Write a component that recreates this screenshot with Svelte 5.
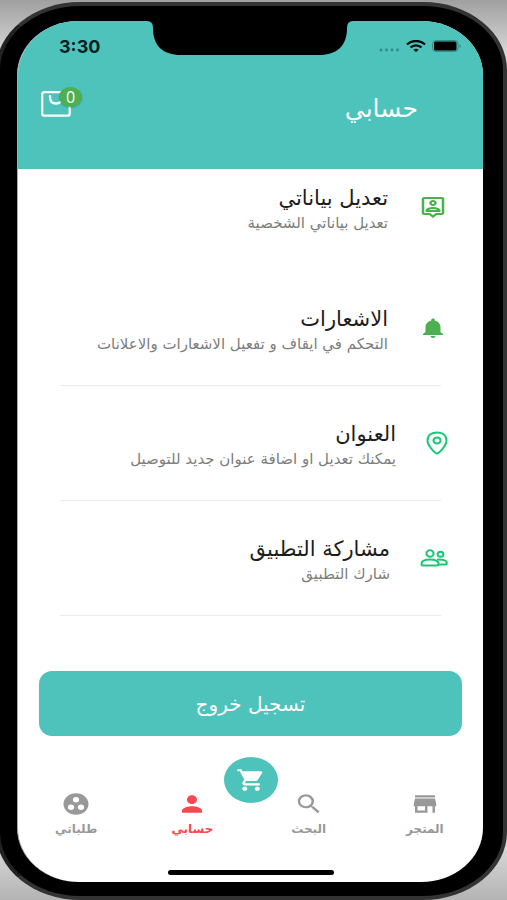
<script>
    let cart_count = 0
    let active = "account"

    const rows = [
        {
            icon: "profile",
            title: "تعديل بياناتي",
            text: "تعديل بياناتي الشخصية"
        },
        {
            icon: "bell",
            title: "الاشعارات",
            text: "التحكم في ايقاف و تفعيل الاشعارات والاعلانات"
        },
        {
            icon: "pin",
            title: "العنوان",
            text: "يمكنك تعديل او اضافة عنوان جديد للتوصيل"
        },
        {
            icon: "people",
            title: "مشاركة التطبيق",
            text: "شارك التطبيق"
        }
    ]

    const tabs = [
        {
            name: "store",
            label: "المتجر",
            path: "M20 4H4v2h16V4zm1 10v-2l-1-5H4l-1 5v2h1v6h10v-6h4v6h2v-6h1zm-9 4H6v-4h6v4z"
        },
        {
            name: "search",
            label: "البحث",
            path: "M15.5 14h-.79l-.28-.27A6.47 6.47 0 0 0 16 9.5 6.5 6.5 0 1 0 9.5 16c1.61 0 3.09-.59 4.23-1.57l.27.28v.79l5 4.99L20.49 19l-4.99-5zm-6 0C7.01 14 5 11.99 5 9.5S7.01 5 9.5 5 14 7.01 14 9.5 11.99 14 9.5 14z"
        },
        {
            name: "account",
            label: "حسابي",
            path: "M12 12c2.21 0 4-1.79 4-4s-1.79-4-4-4-4 1.79-4 4 1.79 4 4 4zm0 2c-2.67 0-8 1.34-8 4v2h16v-2c0-2.66-5.33-4-8-4z"
        },
        {
            name: "orders",
            label: "طلباتي",
            path: "M12 2C6.48 2 2 6.48 2 12s4.48 10 10 10 10-4.48 10-10S17.52 2 12 2zM8 17.5a2.5 2.5 0 0 1 0-5 2.5 2.5 0 0 1 0 5zM9.5 8a2.5 2.5 0 0 1 5 0 2.5 2.5 0 0 1-5 0zm6.5 9.5a2.5 2.5 0 0 1 0-5 2.5 2.5 0 0 1 0 5z"
        }
    ]

    const select_tab = (name) => {
        active = name
    }
</script>

<div class="stage">
    <div class="phone">
        <main class="screen" dir="rtl">
            <header>
                <div class="status" dir="ltr">
                    <span class="time">3:30</span>
                    <svg class="notch" viewBox="0 0 206 35" preserveAspectRatio="none" aria-hidden="true">
                        <path d="M0 0Q6 0 6 7C6 25 16 34 34 34H172C190 34 200 25 200 7Q200 0 206 0Z"/>
                    </svg>
                    <span class="signals">
                        <svg width="22" height="12" viewBox="0 0 22 12" fill="#2c8a85" aria-hidden="true">
                            <circle cx="3" cy="10" r="1.4"/>
                            <circle cx="8.5" cy="10" r="1.4"/>
                            <circle cx="14" cy="10" r="1.4"/>
                            <circle cx="19.5" cy="10" r="1.4"/>
                        </svg>
                        <svg width="20" height="12" viewBox="0 0 20 12" fill="none" stroke="#050d0d" stroke-width="2.3" aria-hidden="true">
                            <path d="M1 4.5C6-.2 14-.2 19 4.5"/>
                            <path d="M4.5 7.5C7.5 4.6 12.5 4.6 15.5 7.5"/>
                            <path d="M7.3 9.8Q10 7.6 12.7 9.8L10 12Z" fill="#050d0d" stroke="none"/>
                        </svg>
                        <svg width="30" height="12" viewBox="0 0 30 12" aria-hidden="true">
                            <rect x=".6" y=".6" width="25.5" height="10.8" rx="3" fill="none" stroke="#2c8a85"/>
                            <rect x="2" y="1.5" width="22.5" height="9" rx="1.5" fill="#000"/>
                            <path d="M27.5 4Q30 6 27.5 8Z" fill="#2c8a85"/>
                        </svg>
                    </span>
                </div>
                <div class="bar">
                    <h1>حسابي</h1>
                    <button class="bag" aria-label="السلة">
                        <svg width="30" height="26" viewBox="0 0 30 26" fill="none" stroke="#fff" stroke-width="2.3" aria-hidden="true">
                            <rect x="1.2" y="1.2" width="27.5" height="23.5" rx="2"/>
                            <path d="M9 4v2c0 4.5 2.5 6.5 6 6.5s6-2 6-6.5V4"/>
                        </svg>
                        <span class="badge">{cart_count}</span>
                    </button>
                </div>
            </header>

            <ul class="menu">
                {#each rows as row}
                    <li>
                        <button class="row">
                            {#if row.icon == "profile"}
                                <svg width="30" height="24" viewBox="0 0 24 24" preserveAspectRatio="none" fill="#4caf50" aria-hidden="true">
                                    <path d="M19 2H5c-1.11 0-2 .9-2 2v14c0 1.1.89 2 2 2h4l3 3 3-3h4c1.1 0 2-.9 2-2V4c0-1.1-.9-2-2-2zm0 16h-4.83L12 20.17 9.83 18H5V4h14v14zM12 11c1.65 0 3-1.35 3-3s-1.35-3-3-3-3 1.35-3 3 1.35 3 3 3zm0-4c.55 0 1 .45 1 1s-.45 1-1 1-1-.45-1-1 .45-1 1-1zm6 8.580c0-2.5-3.97-3.58-6-3.58s-6 1.08-6 3.58V17h12v-1.42zM8.48 15c.74-.5 2.23-1 3.52-1s2.78.5 3.52 1H8.48z"/>
                                </svg>
                            {:else if row.icon == "bell"}
                                <svg width="30" height="24" viewBox="0 0 24 24" preserveAspectRatio="none" fill="#4caf50" aria-hidden="true">
                                    <path d="M12 22c1.1 0 2-.9 2-2h-4c0 1.1.89 2 2 2zm6-6v-5c0-3.07-1.64-5.64-4.5-6.32V4c0-.83-.67-1.5-1.5-1.5s-1.5.67-1.5 1.5v.68C7.63 5.36 6 7.92 6 11v5l-2 2v1h16v-1l-2-2z"/>
                                </svg>
                            {:else if row.icon == "pin"}
                                <svg width="22" height="24" viewBox="0 0 22 24" fill="none" stroke="#19c877" stroke-width="2" aria-hidden="true">
                                    <path d="M11 22.5C9.500 22.5 1.5 15 1.5 9.5C1.5 4.5 5.5 1.5 11 1.5S20.5 4.5 20.5 9.5C20.5 15 12.500 22.5 11 22.5Z"/>
                                    <ellipse cx="11" cy="9.5" rx="3.5" ry="3"/>
                                </svg>
                            {:else}
                                <svg width="28" height="18" viewBox="0 0 28 18" fill="none" stroke="#19c877" stroke-width="2" aria-hidden="true">
                                    <ellipse cx="10" cy="4.5" rx="3.6" ry="3.2"/>
                                    <ellipse cx="20.5" cy="5.2" rx="2.9" ry="2.5"/>
                                    <path d="M1.5 15C1.5 12 5 10.5 10 10.5S18.5 12 18.5 15C18.5 16 18 16.5 17 16.5H3C2 16.5 1.5 16 1.5 15Z"/>
                                    <path d="M17 10.8C22 10 26.8 11.5 26.8 14C26.8 15.3 26 15.6 25 15.6H18.5"/>
                                </svg>
                            {/if}
                            <span class="texts">
                                <span class="title">{row.title}</span>
                                <span class="text">{row.text}</span>
                            </span>
                        </button>
                    </li>
                {/each}
            </ul>

            <button class="logout">تسجيل خروج</button>

            <nav>
                {#each tabs as tab}
                    <a href="#{tab.name}" class:active={active == tab.name} on:click={() => select_tab(tab.name)}>
                        <svg width="30" height="26" viewBox="0 0 24 24" preserveAspectRatio="none" fill="currentColor" aria-hidden="true">
                            <path d={tab.path}/>
                        </svg>
                        {tab.label}
                    </a>
                {/each}
                <button class="cart" aria-label="عربة التسوق">
                    <svg width="30" height="26" viewBox="0 0 24 24" preserveAspectRatio="none" fill="#fff" aria-hidden="true">
                        <path d="M7 18c-1.1 0-1.99.9-1.99 2S5.9 22 7 22s2-.9 2-2-.9-2-2-2zM1 2v2h2l3.6 7.59-1.35 2.45c-.16.28-.25.61-.25.96 0 1.1.9 2 2 2h12v-2H7.42c-.14 0-.25-.11-.25-.25l.03-.12.9-1.63h7.45c.75 0 1.41-.41 1.75-1.03l3.58-6.49A1 1 0 0 0 20 4H5.21l-.94-2H1zm16 16c-1.1 0-1.99.9-1.99 2s.89 2 1.99 2 2-.9 2-2-.9-2-2-2z"/>
                    </svg>
                </button>
            </nav>
            <div class="home"></div>
        </main>
    </div>
</div>

<style>
    :global(body) {
        margin: 0;
    }

    * {
        box-sizing: border-box;
    }

    button {
        border: 0;
        padding: 0;
        background: none;
        font-family: inherit;
        color: inherit;
        cursor: pointer;
    }

    .stage {
        min-height: 100vh;
        display: flex;
        padding-top: 2px;
        overflow: hidden;
        background: linear-gradient(#a0a0a0, #d8d8d8 6%, #d8d8d8 94%, #b4b4b4);
        font-family: "DejaVu Sans", sans-serif;
    }

    .phone {
        flex: 1;
        display: flex;
        margin: 0 0 0 -4px;
        padding: 15px 20px 14px 17px;
        border: 4px solid #333;
        border-left-color: #222;
        border-radius: 84px / 68px;
        background: #000;
    }

    .screen {
        flex: 1;
        min-width: 0;
        display: flex;
        flex-direction: column;
        overflow: hidden;
        border-left: 1px solid #aaa;
        border-radius: 62px / 54px;
        background: #fff;
    }

    header {
        height: 148px;
        margin-left: -1px;
        background: #4dc3bb;
    }

    .status {
        display: grid;
        grid-template-columns: 1fr 206px 1fr;
        align-items: start;
    }

    .time {
        padding: 16px 0 0 42px;
        font: bold 18px/20px Inter, sans-serif;
        color: #06201f;
    }

    .notch {
        width: 206px;
        height: 35px;
    }

    .signals {
        display: flex;
        justify-content: flex-end;
        align-items: center;
        gap: 6px;
        padding: 19px 21px 0 0;
    }

    .bar {
        display: flex;
        justify-content: space-between;
        align-items: flex-start;
        padding: 34px 65px 0 24px;
    }

    h1 {
        margin: 0;
        font-size: 25px;
        line-height: 36px;
        font-weight: normal;
        color: #fff;
    }

    .bag {
        position: relative;
        height: 26px;
    }

    .bag svg {
        display: block;
    }

    .badge {
        position: absolute;
        top: -4px;
        left: 18px;
        width: 23px;
        height: 20px;
        border-radius: 50%;
        background: #4caf50;
        box-shadow: 0 1px 2px rgba(0, 0, 0, 0.2);
        color: #fff;
        font: 16px/20px "Open Sans", sans-serif;
    }

    .menu {
        margin: 0;
        padding: 0;
        list-style: none;
    }

    .row {
        width: 100%;
        display: flex;
        align-items: center;
        gap: 30px;
        padding: 34px 35px 30px;
        text-align: start;
    }

    li:first-child .row {
        padding-top: 15px;
        padding-bottom: 37px;
    }

    li:not(:first-child)::after {
        content: "";
        display: block;
        height: 1px;
        margin: 0 42px;
        background: #ebebeb;
    }

    .row svg {
        flex: none;
        margin-bottom: 4px;
    }

    .texts {
        display: flex;
        flex-direction: column;
        white-space: nowrap;
    }

    .title {
        font-size: 21px;
        line-height: 28px;
        color: #1c1c1c;
    }

    .text {
        font-size: 15px;
        line-height: 22px;
        color: #7d7d7d;
    }

    .logout {
        height: 65px;
        margin: 55px 21px 0;
        border-radius: 13px;
        background: #4dc3bb;
        color: #fff;
        font-size: 20px;
        line-height: 28px;
    }

    nav {
        position: relative;
        display: grid;
        grid-template-columns: repeat(4, 1fr);
        margin-top: auto;
        padding-top: 34px;
    }

    nav a {
        display: flex;
        flex-direction: column;
        align-items: center;
        gap: 2px;
        font-size: 12px;
        line-height: 20px;
        font-weight: bold;
        text-decoration: none;
        color: #999;
    }

    nav a.active {
        color: #fb4750;
    }

    .cart {
        position: absolute;
        top: 0;
        left: 50%;
        width: 54px;
        height: 46px;
        display: grid;
        place-items: center;
        transform: translateX(-50%);
        border-radius: 50%;
        background: #4dc3bb;
    }

    .home {
        width: 166px;
        height: 5px;
        margin: 31px auto 7px;
        border-radius: 3px;
        background: #000;
    }
</style>
